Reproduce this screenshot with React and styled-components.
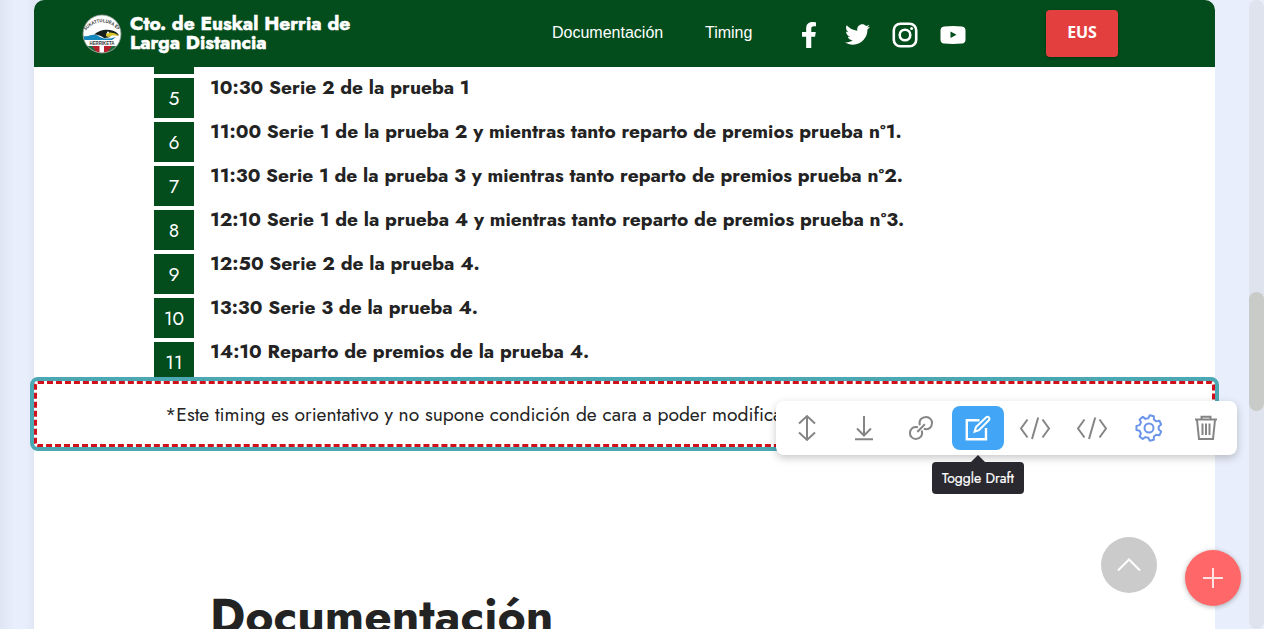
import React from "react";
import styled, { createGlobalStyle } from "styled-components";
import { FaFacebookF, FaTwitter } from "react-icons/fa";

const jost = `Jost, Lato, "Open Sans", sans-serif`;

const Global = createGlobalStyle`
  * { box-sizing: border-box; }
  html, body { margin: 0; height: 629px; overflow: hidden; background: #e8eefb; }
`;
const Page = styled.div`
  position: relative;
  width: 1264px;
  height: 629px;
  padding: 0 49px 0 34px;
  overflow: hidden;
  background: linear-gradient(90deg, #dfe5f3 0, #e8eefb 14px, #e8eefb 26px, #e0e6f3 34px, #e8eefb 40px);
`;
const Sheet = styled.div`
  height: 629px;
  background: #fff;
  border-radius: 10px 10px 0 0;
`;
const Navbar = styled.header`
  display: flex;
  align-items: center;
  height: 67px;
  padding-left: 48px;
  background: #034c1c;
  border-radius: 10px 10px 0 0;
`;
const Brand = styled.div`
  display: flex;
  align-items: center;
  gap: 8px;
  width: 470px;
`;
const BrandName = styled.div`
  font: 700 19.2px/19.2px ${jost};
  margin-top: -1px;
  color: #fff;
  white-space: nowrap;
  -webkit-text-stroke: 0.5px #fff;
`;
const NavLink = styled.a`
  width: ${(p) => p.$w}px;
  font: 16px/20px "Liberation Sans", Arial, sans-serif;
  color: #fff;
  margin-top: -2px;
`;
const Socials = styled.div`
  display: flex;
  align-items: center;
  width: 261px;
  color: #fff;
  padding-top: 2px;
`;
const Social = styled.span`
  display: flex;
  justify-content: center;
  width: 48px;
`;
const LangButton = styled.button`
  width: 72px;
  height: 47px;
  padding: 0 0 3px;
  border: 0;
  border-radius: 4px;
  background: #e43f3f;
  color: #fff;
  font: 700 16px/20px "Noto Sans", sans-serif;
  letter-spacing: -0.1px;
  box-shadow: 0 1px 3px rgba(0, 0, 0, 0.3);
`;
const Schedule = styled.ol`
  display: flex;
  flex-direction: column;
  gap: 4px;
  height: 310px;
  margin: 0;
  padding: 0 0 0 120px;
  list-style: none;
  overflow: hidden;
`;
const Row = styled.li`
  display: flex;
  flex: none;
  gap: 16px;
  height: 40px;
`;
const Stub = styled.li`
  flex: none;
  width: 40px;
  height: 7px;
  background: #034c1c;
`;
const Num = styled.span`
  width: 40px;
  height: 40px;
  background: #034c1c;
  color: #fff;
  font: 400 19.2px/41px ${jost};
  text-align: center;
`;
const Label = styled.span`
  font: 700 19.2px/18px ${jost};
  color: #232323;
  white-space: nowrap;
`;
const NoteBlock = styled.section`
  position: relative;
  width: 1189px;
  height: 74px;
  margin-left: -4px;
  border: 4px solid #4ba8b2;
  border-radius: 8px;
  background: #fff;
`;
const NoteInner = styled.div`
  height: 66px;
  padding: 18px 0 0 128px;
  border: 3px dashed #d0101a;
  border-radius: 4px;
`;
const NoteText = styled.p`
  margin: 0;
  white-space: nowrap;
  font: 400 19.2px/24px ${jost};
  color: #232323;
`;
const Heading = styled.h2`
  margin: 137px 0 0 176px;
  font: 700 48px/58px ${jost};
  color: #232323;
`;
const Toolbar = styled.div`
  position: absolute;
  left: 776px;
  top: 401px;
  display: flex;
  align-items: center;
  gap: 5px;
  width: 461px;
  height: 54px;
  padding-left: 5px;
  border-radius: 8px;
  background: #fff;
  box-shadow: 0 3px 9px rgba(0, 0, 0, 0.22);
`;
const Tool = styled.button`
  display: flex;
  align-items: center;
  justify-content: center;
  width: 52px;
  height: 44px;
  padding: 0;
  border: 0;
  border-radius: 8px;
  background: ${(p) => (p.$active ? "#42a5f5" : "transparent")};
  color: ${(p) => p.$color || "#858585"};
`;
const Tooltip = styled.div`
  position: absolute;
  left: 932px;
  top: 462px;
  width: 92px;
  height: 32px;
  border-radius: 4px;
  background: #29292f;
  color: #fff;
  font: 400 14px/32px ${jost};
  text-align: center;
  white-space: nowrap;
  -webkit-text-stroke: 0.2px #fff;
  &::before {
    content: "";
    position: absolute;
    left: 39px;
    top: -7px;
    border: 7px solid transparent;
    border-top: 0;
    border-bottom-color: #29292f;
  }
`;
const RoundButton = styled.button`
  position: absolute;
  left: ${(p) => p.$x}px;
  top: ${(p) => p.$y}px;
  display: flex;
  align-items: center;
  justify-content: center;
  width: 56px;
  height: 56px;
  padding: 0;
  border: 0;
  border-radius: 50%;
  background: ${(p) => p.$bg};
  box-shadow: ${(p) => (p.$raised ? "0 1px 5px rgba(0,0,0,.3)" : "none")};
`;
const ScrollTrack = styled.div`
  position: absolute;
  right: 0;
  top: 0;
  width: 15px;
  height: 629px;
  padding-top: 292px;
  border-radius: 8px;
  background: #dfe3ee;
`;
const ScrollThumb = styled.div`
  height: 119px;
  border-radius: 8px;
  background: #c8cbc7;
`;

const Icon = ({ size = 28, sw = 2, children }) => (
  <svg width={size} height={size} viewBox={`0 0 ${size} ${size}`} fill="none" stroke="currentColor" strokeWidth={sw}>
    {children}
  </svg>
);

const Logo = () => (
  <svg width="40" height="40" viewBox="0 0 40 40">
    <defs>
      <clipPath id="disc"><circle cx="20" cy="20" r="18.7" /></clipPath>
      <path id="arc" d="M2.500 17.500Q20 -1 37.500 17.500" />
    </defs>
    <circle cx="20" cy="20" r="19" fill="#fff" />
    <g clipPath="url(#disc)">
      <path d="M0 32h40v8H0z" fill="#b7202b" />
      <path d="M0 32L10 32L16 40H8zM40 32H30L24 40H32z" fill="#177142" />
      <path d="M17.500 31h4.500v9h-4.500z" fill="#fff" />
      <path d="M0 22Q5 23 9 21Q15 20 18 23Q24 26 34 23L30 26H2z" fill="#1687bd" />
      <path d="M12 20.500Q19 14.500 28 16Q35 17 37 21.500L29 20.500Q29 24 22 24Q18 20.500 12 20.500z" fill="#15201d" />
      <path d="M24 19.500Q30 17 37 21.500L30 21.500Q27 24 24 22z" fill="#d6c52b" />
      <circle cx="26" cy="18.500" r="1" fill="#fff" />
    </g>
    <text fontFamily="Liberation Sans" fontSize="4.800" fontWeight="700" fill="#333">
      <textPath href="#arc" startOffset="1" textLength="38" lengthAdjust="spacingAndGlyphs">SUKATTULUEA EF</textPath>
    </text>
    <text x="7.500" y="30.500" textLength="25" lengthAdjust="spacingAndGlyphs" fontFamily="Liberation Sans" fontSize="4.600" fontWeight="700" fill="#333">HERRIKETA</text>
    <circle cx="20" cy="20" r="19" fill="none" stroke="#8a9a8e" strokeWidth=".8" />
  </svg>
);

const gearPath = (() => {
  const teeth = 7;
  const pts = [];
  for (let i = 0; i < teeth; i++) {
    const c = -77 + (i * 360) / teeth;
    [[-17, 9.8], [-9.5, 12.7], [9.5, 12.7], [17, 9.8]].forEach(([a, r]) => {
      const t = ((c + a) * Math.PI) / 180;
      pts.push(`${(14 + r * Math.cos(t)).toFixed(2)} ${(14 + r * Math.sin(t)).toFixed(2)}`);
    });
  }
  return `M${pts.join("L")}Z`;
})();

const Code = () => (
  <Icon size={32}>
    <path d="M8.500 7.500L2 16.500L8.500 25.500M23.500 7.500L30 16.500L23.500 25.500M19.200 5.500L13 27" />
  </Icon>
);

const rows = [
  [5, "10:30 Serie 2 de la prueba 1"],
  [6, "11:00 Serie 1 de la prueba 2 y mientras tanto reparto de premios prueba n°1."],
  [7, "11:30 Serie 1 de la prueba 3 y mientras tanto reparto de premios prueba n°2."],
  [8, "12:10 Serie 1 de la prueba 4 y mientras tanto reparto de premios prueba n°3."],
  [9, "12:50 Serie 2 de la prueba 4."],
  [10, "13:30 Serie 3 de la prueba 4."],
  [11, "14:10 Reparto de premios de la prueba 4."],
];

export default function App() {
  return (
    <Page>
      <Global />
      <Sheet>
        <Navbar>
          <Brand>
            <Logo />
            <BrandName>Cto. de Euskal Herria de<br />Larga Distancia</BrandName>
          </Brand>
          <NavLink $w={153}>Documentación</NavLink>
          <NavLink $w={80}>Timing</NavLink>
          <Socials>
            <Social><FaFacebookF size={26} /></Social>
            <Social><FaTwitter size={25} /></Social>
            <Social>
              <Icon size={26} sw={2.6}>
                <rect x="1.800" y="1.800" width="22.400" height="22.400" rx="6.500" />
                <circle cx="13" cy="13" r="5.300" />
                <circle cx="19.600" cy="6.400" r="1.500" fill="currentColor" stroke="none" />
              </Icon>
            </Social>
            <Social>
              <svg width="26" height="18" viewBox="0 0 26 18">
                <path fillRule="evenodd" fill="#fff" d="M4 .4Q13-.3 22 .4Q25.500.8 25.500 4.500V13.500Q25.500 17.200 22 17.600Q13 18.300 4 17.600Q.5 17.200.5 13.500V4.500Q.5.800 4 .4zM10.500 5.600V12L16.500 8.800z" />
              </svg>
            </Social>
          </Socials>
          <LangButton>EUS</LangButton>
        </Navbar>
        <Schedule>
          <Stub />
          {rows.map(([n, text]) => (
            <Row key={n}>
              <Num>{n}</Num>
              <Label>{text}</Label>
            </Row>
          ))}
        </Schedule>
        <NoteBlock>
          <NoteInner>
            <NoteText>*Este timing es orientativo y no supone condición de cara a poder modifica</NoteText>
          </NoteInner>
        </NoteBlock>
        <Heading>Documentación</Heading>
      </Sheet>
      <ScrollTrack><ScrollThumb /></ScrollTrack>
      <Toolbar>
        <Tool><Icon><path d="M14 2V26M6 9.500L14 2L22 9.500M6 18.500L14 26L22 18.500" /></Icon></Tool>
        <Tool><Icon><path d="M14 2V21M7 14.500L14 21.500L21 14.500M5 25.200H23" /></Icon></Tool>
        <Tool>
          <Icon>
            <path d="M12.800 11.200C11.600 6.200 14.600 3 19.200 3A5.800 5.800 0 0 1 25 9.200C24.800 13.400 21.500 16.200 16.800 14.800M14.800 16.500C16.200 21.500 12.800 25 8.800 25A5.800 5.800 0 0 1 3 18.800C3.200 14.600 6.500 12 11 13.200M10.300 18L17.800 10.300" />
          </Icon>
        </Tool>
        <Tool $active $color="#fff">
          <Icon size={28} sw={2.4}>
            <path d="M15.500 6.200H2.800V25.300H22V14" />
            <path d="M10.600 17.600L12 13L22.200 3.200Q23.600 2.200 24.900 3.400Q26.100 4.700 25 6L15 16.200z" strokeWidth="2" />
          </Icon>
        </Tool>
        <Tool><Code /></Tool>
        <Tool><Code /></Tool>
        <Tool $color="#6c94e8">
          <Icon>
            <path d={gearPath} strokeLinejoin="round" />
            <circle cx="14" cy="14" r="4.500" />
          </Icon>
        </Tool>
        <Tool>
          <Icon>
            <path d="M3 5.500H25M9.500 5V2.800H18.500V5M5 6L7 25H21L23 6M10.500 9.500V21M14 9.500V21M17.500 9.500V21" />
          </Icon>
        </Tool>
      </Toolbar>
      <Tooltip>Toggle Draft</Tooltip>
      <RoundButton $x={1101} $y={537} $bg="#cbcbcb">
        <svg width="24" height="14" viewBox="0 0 24 14" fill="none" stroke="#fff" strokeWidth="2"><path d="M1 12.500L12 1.500L23 12.500" /></svg>
      </RoundButton>
      <RoundButton $x={1185} $y={550} $bg="#ff6768" $raised>
        <svg width="20" height="20" viewBox="0 0 20 20" stroke="#ffe3e3" strokeWidth="2"><path d="M10 0V20M0 10H20" /></svg>
      </RoundButton>
    </Page>
  );
}
